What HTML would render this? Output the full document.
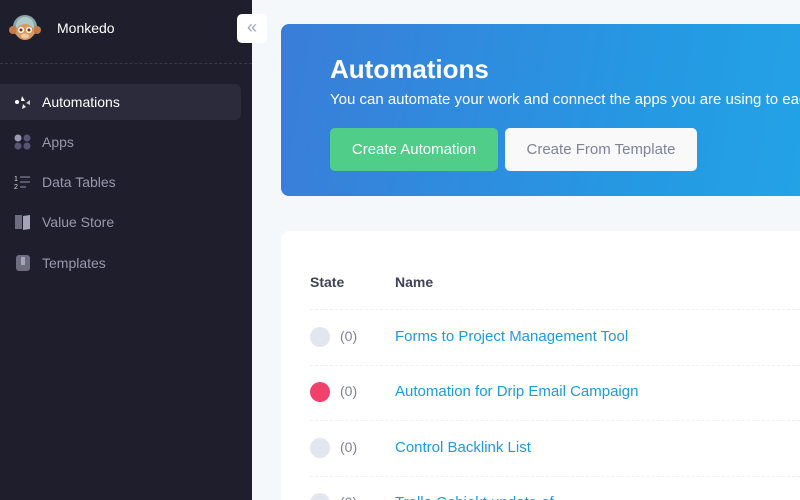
<!DOCTYPE html>
<html><head><meta charset="utf-8"><style>
*{margin:0;padding:0;box-sizing:border-box}
html,body{width:800px;height:500px;overflow:hidden}
body{background:#f5f8fa;font-family:"Liberation Sans",sans-serif;position:relative}
.sb{position:absolute;left:0;top:0;width:252px;height:500px;background:#1e1e2d}
.logo{position:absolute;left:9px;top:12px;width:32px;height:32px}
.brand{position:absolute;left:57px;top:20px;color:#fff;font-size:14px}
.div{position:absolute;left:0;top:63px;width:252px;border-top:1px dashed #393945}
.item{position:absolute;left:0;width:241px;height:36px;border-radius:0 6px 6px 0;color:#9899ac;font-size:14px;line-height:36px;padding-left:42px}
.item.act{background:#2b2b3c;color:#fff}
.ic{position:absolute;left:14px;top:10px;width:18px;height:16px}
.tog{position:absolute;left:237px;top:14px;width:30px;height:29px;background:#fff;border-radius:5px;color:#a1a5b7;font-size:18px;text-align:center;line-height:26px}
.ban{position:absolute;left:281px;top:24px;width:519px;height:172px;border-radius:8px 0 0 8px;background:linear-gradient(100deg,#3a7dd8,#2599e3 70%,#23a2e6);overflow:hidden}
.ban h1{position:absolute;left:49px;top:30px;color:#fff;font-size:26px;font-weight:bold}
.ban p{position:absolute;left:49px;top:67px;color:#fff;font-size:15px;white-space:nowrap}
.btn{position:absolute;top:104px;height:43px;border-radius:5px;font-size:15px;line-height:43px;text-align:center}
.card{position:absolute;left:281px;top:231px;width:519px;height:269px;background:#fff;border-radius:8px 0 0 0;overflow:hidden}
.th{position:absolute;top:43px;font-size:14px;font-weight:bold;color:#3f4254}
.sep{position:absolute;left:29px;width:490px;border-top:1px dashed #eff2f5}
.dot{position:absolute;left:29px;width:20px;height:20px;border-radius:50%;background:#e4e6ef}
.cnt{position:absolute;left:59px;font-size:14px;color:#7e8299}
.nm{position:absolute;left:114px;font-size:15px;color:#1b9be0;white-space:nowrap}
</style></head><body>
<div class="sb">
<svg class="logo" viewBox="0 0 32 32"><circle cx="16" cy="15" r="12" fill="#8aa4a8"/><circle cx="16" cy="14" r="9" fill="#b0c9c9"/><circle cx="4" cy="18" r="4" fill="#c87a4a"/><circle cx="28" cy="18" r="4" fill="#c87a4a"/><ellipse cx="16" cy="20" rx="9" ry="8" fill="#d9995f"/><circle cx="12" cy="18" r="3" fill="#fff"/><circle cx="20" cy="18" r="3" fill="#fff"/><circle cx="12" cy="18" r="1.5" fill="#6b2a1a"/><circle cx="20" cy="18" r="1.5" fill="#6b2a1a"/><ellipse cx="16" cy="24" rx="4" ry="2.5" fill="#f0c7a0"/></svg>
<div class="brand">Monkedo</div>
<div class="div"></div>
<div class="item act" style="top:84px"><svg class="ic" viewBox="0 0 18 16"><path d="M8 2l3 5-4 0z" fill="#fff"/><path d="M12 9l4-3 0 5z" fill="#ccc"/><path d="M9 10l-1 5 4-2z" fill="#eee"/><circle cx="3" cy="8" r="2" fill="#fff"/></svg>Automations</div>
<div class="item" style="top:124px"><svg class="ic" viewBox="0 0 18 16"><circle cx="4" cy="4" r="3.5" fill="#9a9cae"/><circle cx="13" cy="4" r="3.5" fill="#565674"/><circle cx="4" cy="12" r="3.5" fill="#565674"/><circle cx="13" cy="12" r="3.5" fill="#565674"/></svg>Apps</div>
<div class="item" style="top:164px"><svg class="ic" viewBox="0 0 18 16"><text x="0" y="7" font-size="7" fill="#ddd">1</text><text x="0" y="15" font-size="7" fill="#ddd">2</text><path d="M6 3h10M6 8h10M6 13h6" stroke="#6d6d80" stroke-width="1.5"/></svg>Data Tables</div>
<div class="item" style="top:204px"><svg class="ic" viewBox="0 0 18 16"><rect x="1" y="1" width="7" height="14" fill="#6d6d80"/><path d="M9 2l7-1v14l-7 1z" fill="#a1a5b7"/></svg>Value Store</div>
<div class="item" style="top:245px"><svg class="ic" viewBox="0 0 18 16"><rect x="2" y="0" width="14" height="16" rx="3" fill="#6d6d80"/><rect x="7" y="2" width="4" height="8" fill="#a1a5b7"/></svg>Templates</div>
</div>
<div class="tog">«</div>
<div class="ban"><h1>Automations</h1><p>You can automate your work and connect the apps you are using to each other</p>
<div class="btn" style="left:49px;width:168px;background:#50cd89;color:#fff">Create Automation</div>
<div class="btn" style="left:224px;width:192px;background:#f9f9f9;color:#7e8299">Create From Template</div></div>
<div class="card">
<div class="th" style="left:29px">State</div><div class="th" style="left:114px">Name</div>
<div class="sep" style="top:78px"></div><div class="sep" style="top:134px"></div><div class="sep" style="top:189px"></div><div class="sep" style="top:245px"></div>
<div class="dot" style="top:96px"></div><div class="cnt" style="top:97px">(0)</div><div class="nm" style="top:97px">Forms to Project Management Tool</div>
<div class="dot" style="top:151px;background:#f1416c"></div><div class="cnt" style="top:152px">(0)</div><div class="nm" style="top:152px">Automation for Drip Email Campaign</div>
<div class="dot" style="top:207px"></div><div class="cnt" style="top:208px">(0)</div><div class="nm" style="top:208px">Control Backlink List</div>
<div class="dot" style="top:262px"></div><div class="cnt" style="top:263px">(0)</div><div class="nm" style="top:263px">Trello Cobjekt update of</div>
</div>
</body></html>
